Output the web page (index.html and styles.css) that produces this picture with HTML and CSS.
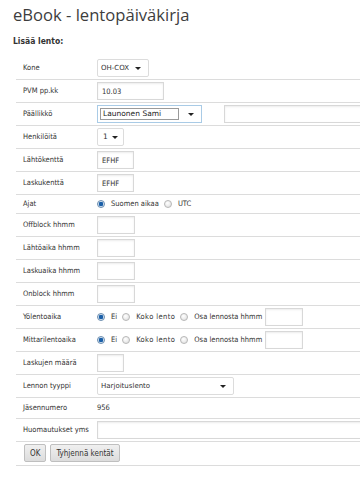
FILE: index.html
```html
<!DOCTYPE html>
<html lang="fi">
<head>
<meta charset="utf-8">
<title>eBook - lentopäiväkirja</title>
<link rel="stylesheet" href="styles.css">
</head>
<body>
<div class="page">
  <h1 class="title">eBook - lentopäiväkirja</h1>
  <h2 class="subtitle">Lisää lento:</h2>
  <table class="form">
    <tr><td class="lbl">Kone</td><td class="val"><div class="sel w-kone"><span class="sel-text">OH-COX</span><span class="caret"></span></div></td></tr>
    <tr><td class="lbl">PVM pp.kk</td><td class="val"><input class="inp w-pvm" value="10.03"></td></tr>
    <tr><td class="lbl">Päällikkö</td><td class="val"><div class="row-inline"><div class="combo"><span class="combo-text">Launonen Sami</span><span class="caret"></span></div><input class="inp w-wide"></div></td></tr>
    <tr><td class="lbl">Henkilöitä</td><td class="val"><div class="sel w-henk"><span class="sel-text">1</span><span class="caret"></span></div></td></tr>
    <tr><td class="lbl">Lähtökenttä</td><td class="val"><input class="inp w-kentta" value="EFHF"></td></tr>
    <tr><td class="lbl">Laskukenttä</td><td class="val"><input class="inp w-kentta" value="EFHF"></td></tr>
    <tr class="short"><td class="lbl">Ajat</td><td class="val"><div class="radios"><span class="radio on"></span><span class="rl">Suomen aikaa</span><span class="radio"></span><span class="rl">UTC</span></div></td></tr>
    <tr><td class="lbl">Offblock hhmm</td><td class="val"><input class="inp w-time"></td></tr>
    <tr><td class="lbl">Lähtöaika hhmm</td><td class="val"><input class="inp w-time"></td></tr>
    <tr><td class="lbl">Laskuaika hhmm</td><td class="val"><input class="inp w-time"></td></tr>
    <tr><td class="lbl">Onblock hhmm</td><td class="val"><input class="inp w-time"></td></tr>
    <tr><td class="lbl">Yölentoaika</td><td class="val"><div class="radios"><span class="radio on"></span><span class="rl">Ei</span><span class="radio"></span><span class="rl rl-wide">Koko lento</span><span class="radio"></span><span class="rl">Osa lennosta hhmm</span><input class="inp w-time"></div></td></tr>
    <tr><td class="lbl">Mittarilentoaika</td><td class="val"><div class="radios"><span class="radio on"></span><span class="rl">Ei</span><span class="radio"></span><span class="rl rl-wide">Koko lento</span><span class="radio"></span><span class="rl">Osa lennosta hhmm</span><input class="inp w-time"></div></td></tr>
    <tr><td class="lbl">Laskujen määrä</td><td class="val"><input class="inp w-lask"></td></tr>
    <tr><td class="lbl">Lennon tyyppi</td><td class="val"><div class="sel w-tyyppi"><span class="sel-text">Harjoituslento</span><span class="caret"></span></div></td></tr>
    <tr class="mid"><td class="lbl">Jäsennumero</td><td class="val">956</td></tr>
    <tr><td class="lbl">Huomautukset yms</td><td class="val"><input class="inp w-huom"></td></tr>
    <tr><td class="btns" colspan="2"><div class="btn-row"><button class="btn">OK</button><button class="btn">Tyhjennä kentät</button></div></td></tr>
  </table>
</div>
</body>
</html>
```
FILE: styles.css
```css
html, body {
  margin: 0;
  padding: 0;
  background: #fff;
  overflow: hidden;
}
.page {
  padding: 0 0 0 13px;
  width: 420px;
  font-family: "DejaVu Sans Condensed", "DejaVu Sans", Verdana, sans-serif;
  font-stretch: condensed;
  font-size: 7.5px;
  color: #333;
}
.title {
  margin: 0;
  padding-top: 4px;
  font-family: "Open Sans", sans-serif;
  font-stretch: normal;
  font-weight: 400;
  font-size: 16.6px;
  line-height: 21px;
  color: #3d3d3d;
}
.subtitle {
  margin: 10px 0 0 0;
  font-size: 8.5px;
  font-weight: bold;
  line-height: 12px;
  color: #333;
}
.form {
  margin: 10px 0 0 3px;
  border-collapse: collapse;
  width: 400px;
}
.form td {
  border-bottom: 1px solid #dcdcdc;
  padding: 2px 0;
  height: 18px;
  line-height: 10px;
  vertical-align: middle;
}
.form tr.short td { height: 14px; }
.form tr.mid td { height: 16px; }
.lbl {
  width: 72px;
  padding-left: 7px !important;
  color: #333;
  white-space: nowrap;
}
.val {
  padding-left: 2px !important;
  white-space: nowrap;
}
.inp {
  display: block;
  box-sizing: border-box;
  height: 18px;
  margin: 0;
  padding: 0 4px;
  border: 1px solid #d8d8d8;
  box-shadow: inset 0 1px 2px rgba(0,0,0,0.08);
  font-family: "DejaVu Sans Condensed", "DejaVu Sans", sans-serif;
  font-stretch: condensed;
  font-size: 7.5px;
  color: #333;
  background: #fff;
}
.w-pvm { width: 67px; }
.w-kentta { width: 37px; }
.w-time { width: 38px; }
.w-lask { width: 27px; }
.w-wide { width: 160px; margin-left: 22px; }
.w-huom { width: 300px; }
.sel {
  box-sizing: border-box;
  display: flex;
  align-items: center;
  height: 18px;
  border: 1px solid #dcdcdc;
  border-radius: 2px;
  background: #fff;
  padding: 0 7px 0 3px;
  font-family: "DejaVu Sans", sans-serif;
  font-stretch: normal;
  font-size: 7px;
  color: #333;
}
.sel-text { flex: 1; }
.caret {
  width: 0;
  height: 0;
  border-left: 3px solid transparent;
  border-right: 3px solid transparent;
  border-top: 3px solid #222;
}
.w-kone { width: 52px; }
.w-henk { width: 27px; padding-left: 5px; padding-right: 5px; font-size: 7.5px; }
.w-tyyppi { width: 137px; }
.row-inline {
  display: flex;
  align-items: center;
}
.combo {
  box-sizing: border-box;
  display: flex;
  align-items: center;
  width: 105px;
  height: 18px;
  border: 1px solid #a9cbe6;
  padding: 2px 7px 2px 2px;
  background: #fff;
  font-family: "DejaVu Sans", sans-serif;
  font-stretch: normal;
  font-size: 7.5px;
}
.combo-text {
  box-sizing: border-box;
  flex: 1;
  height: 12px;
  line-height: 10px;
  border: 1px solid #9a9a9a;
  padding-left: 2px;
  margin-right: 9px;
  color: #222;
}
.radios {
  display: flex;
  align-items: center;
}
.radio {
  box-sizing: border-box;
  width: 8px;
  height: 8px;
  border-radius: 50%;
  border: 1px solid #b8b8b8;
  background: radial-gradient(circle at 40% 35%, #fff, #dcdcdc);
  margin-right: 6px;
}
.radio.on {
  border-color: #6f8fb0;
  background: radial-gradient(circle, #1a5fa8 0 2px, #cfe0f0 2.5px);
}
.rl { margin-right: 5px; }
.rl-wide { letter-spacing: 0.4px; }
.radios .inp { margin-left: -2px; }
.btns {
  padding: 2px 0 3px 8px !important;
}
.btn-row {
  display: flex;
  gap: 4px;
}
.btn {
  box-sizing: border-box;
  height: 18px;
  margin: 0;
  padding: 0 5px;
  border: 1px solid #bfbfbf;
  border-radius: 2px;
  background: linear-gradient(#f0f0f0, #dcdcdc);
  font-family: "DejaVu Sans Condensed", "DejaVu Sans", sans-serif;
  font-stretch: condensed;
  font-size: 8px;
  color: #333;
}
```
